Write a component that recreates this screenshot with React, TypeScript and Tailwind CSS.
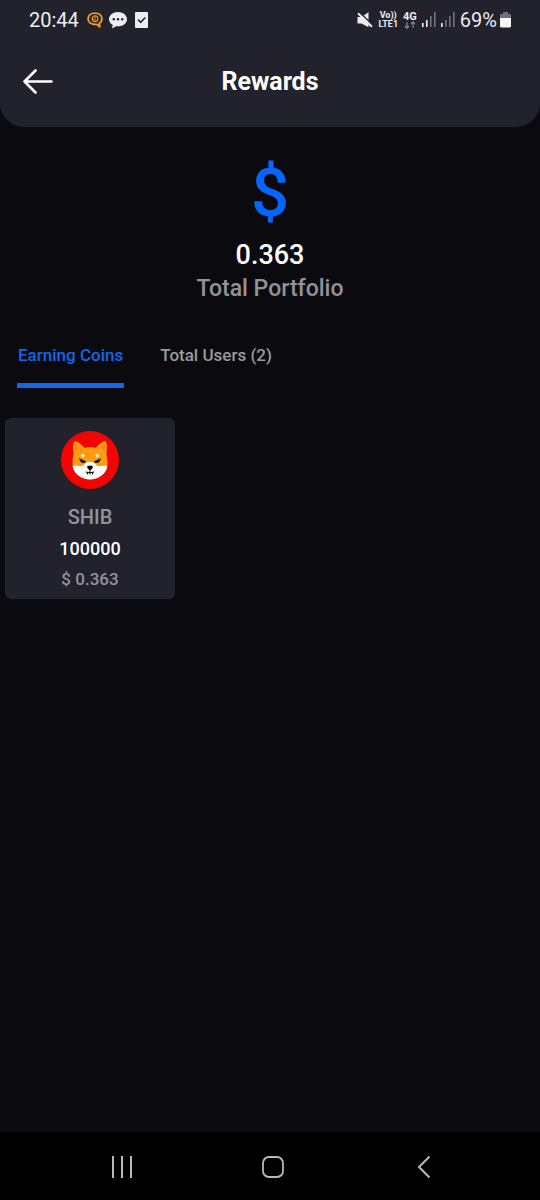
import React, { useState } from 'react';

interface Coin {
  symbol: string;
  amount: string;
  value: string;
}

const COINS: Coin[] = [{ symbol: 'SHIB', amount: '100000', value: '$ 0.363' }];

const TABS = ['Earning Coins', 'Total Users (2)'];

const ShibLogo: React.FC = () => (
  <svg viewBox="0 0 58 58" className="h-[58px] w-[58px]" aria-hidden="true">
    <circle cx="29" cy="29" r="29" fill="#f20500" />
    <path
      d="M14 10c-2 1.500-2.500 6.500-1.300 12.500-.7 3.500-1.400 6.500-1.200 10.500.3 9 9.500 15.300 17.500 15.300S46.200 42 46.500 33c.2-4-.5-7-1.200-10.500C46.500 16.500 46 11.500 44 10c-3.300.7-6.700 3.500-9.200 6.700-3.600-.8-8-.8-11.600 0C20.700 13.500 17.300 10.700 14 10z"
      fill="#ff9c14"
    />
    <path d="M14.500 12.500c-1 2.500-1 5.500-.4 8.500 1-1.700 2.300-3 4.200-4-1-2-2.300-3.500-3.800-4.500z" fill="#f58a18" />
    <path d="M43.500 12.500c1 2.500 1 5.500.4 8.500-1-1.700-2.300-3-4.200-4 1-2 2.300-3.500 3.800-4.500z" fill="#f58a18" />
    <path
      d="M11.600 35c2-.8 4.700-.8 7 .2 2 .2 3.800-.5 5-2.200 1.200-1.500 3-2.300 5.400-2.300s4.200.8 5.400 2.300c1.200 1.700 3 2.400 5 2.200 2.300-1 5-1 7-.2-1 8.300-9.500 13.500-17.400 13.500S12.600 43.300 11.600 35z"
      fill="#fff"
    />
    <circle cx="21.800" cy="24.600" r="1.700" fill="#fff6e8" />
    <circle cx="36.200" cy="24.600" r="1.700" fill="#fff6e8" />
    <path d="M18.500 27.800l6 2.700-.5 1.200-3.700-.4z" fill="#1b130c" stroke="#1b130c" strokeWidth=".8" />
    <path d="M39.500 27.800l-6 2.700.5 1.200 3.700-.4z" fill="#1b130c" stroke="#1b130c" strokeWidth=".8" />
    <path d="M26.500 34.800h5l.3 1.900-2 2.300h-1.600l-2-2.300z" fill="#000" />
    <path
      d="M29 38.500v3M24.800 41q4.200 1.400 8.400 0M26.500 41.500v1.800M29 41.500v2M31.500 41.500v1.800"
      fill="none"
      stroke="#000"
      strokeWidth="1"
    />
  </svg>
);

const SignalBars: React.FC<{ level: number }> = ({ level }) => (
  <svg viewBox="0 0 14 16" className="h-4 w-[14px]" aria-hidden="true">
    {[4, 7, 11, 15].map((height, i) => (
      <rect
        key={height}
        x={i * 4}
        y={15 - height}
        width="1.600"
        height={height}
        fill={i < level ? '#f2f2f4' : '#72727b'}
      />
    ))}
  </svg>
);

const StatusBar: React.FC = () => (
  <div className="flex h-10 items-center justify-between px-[29px] text-[#ededf0]">
    <div className="flex items-center gap-2">
      <span className="text-[20px] leading-6">20:44</span>
      <div className="flex items-center gap-[6px]">
        <svg viewBox="0 0 17 17" className="h-4 w-4" fill="none" aria-hidden="true">
          <path
            d="M8.500 1.200C4 1.200 1.200 3.800 1.200 7.300s2.800 5.900 7 5.900h2.300l3 2.600-.4-3.700c1.800-1.100 2.700-2.700 2.700-4.800 0-3.500-2.800-6.100-7.300-6.100z"
            stroke="#f29d18"
            strokeWidth="2"
            strokeLinejoin="round"
          />
          <circle cx="8.500" cy="7.200" r="3" stroke="#f29d18" strokeWidth="1.300" />
          <path d="M9.600 6.400a1.300 1.300 0 1 0 0 1.700" stroke="#f29d18" strokeWidth="1" />
        </svg>
        <svg viewBox="0 0 18 18" className="h-[18px] w-[18px]" aria-hidden="true">
          <path
            d="M9 1C4 1 0 4.200 0 8.200c0 2.500 1.500 4.500 3.800 5.800L3 17.500l4.200-2.300 1.800.1c5 0 9-3.100 9-7.100S14 1 9 1z"
            fill="#ededf0"
          />
          <circle cx="4.800" cy="8.200" r="1.200" fill="#22222d" />
          <circle cx="9" cy="8.200" r="1.200" fill="#22222d" />
          <circle cx="13.200" cy="8.200" r="1.200" fill="#22222d" />
        </svg>
        <svg viewBox="0 0 15 16" className="h-4 w-[15px]" aria-hidden="true">
          <rect x="2" width="13" height="16" rx="1" fill="#ededf0" />
          <path d="M5 7.500l2.700 2.800L12.300 5.500" fill="none" stroke="#22222d" strokeWidth="1.600" />
        </svg>
      </div>
    </div>
    <div className="flex items-center gap-[5px]">
      <svg viewBox="0 0 16 16" className="h-4 w-4" aria-hidden="true">
        <path d="M.5 5h4L11.500.3v15L4.500 11.500h-4z" fill="#ededf0" />
        <path d="M2.500 0.300l13 12.400" stroke="#22222d" strokeWidth="1.400" />
        <path d="M1 1.300l14 13.500" stroke="#ededf0" strokeWidth="2" />
      </svg>
      <div className="flex flex-col items-center text-[9px] font-bold leading-[9px]">
        <span>Vo))</span>
        <span>LTE1</span>
      </div>
      <div className="flex flex-col items-center text-[11px] font-bold leading-[9px]">
        <span>4G</span>
        <svg viewBox="0 0 12 8" className="h-2 w-3" aria-hidden="true">
          <path
            d="M3 1v6M1 5l2 2.200L5 5M9 7V1M7 3l2-2.200L11 3"
            fill="none"
            stroke="#85858e"
            strokeWidth="1.200"
          />
        </svg>
      </div>
      <SignalBars level={2} />
      <SignalBars level={1} />
      <div className="flex items-center gap-[3px]">
        <span className="text-[20px] leading-6">69%</span>
        <svg viewBox="0 0 11 16" className="h-4 w-[11px]" aria-hidden="true">
          <path d="M3 0h5v2h2q1 0 1 1v3H0V3q0-1 1-1h2z" fill="#6f6f78" />
          <path d="M0 6h11v8q0 1.500-1.500 1.500h-8Q0 15.500 0 14z" fill="#f5f5f6" />
        </svg>
      </div>
    </div>
  </div>
);

const Header: React.FC = () => (
  <header className="rounded-b-3xl bg-[#22222d] pb-1">
    <StatusBar />
    <div className="grid h-[83px] grid-cols-[30px_1fr_30px] items-center px-[23px]">
      <button type="button" aria-label="Back">
        <svg viewBox="0 0 30 26" className="h-[26px] w-[30px]" fill="none" aria-hidden="true">
          <path
            d="M28.500 12.500H1.500M12.500 1.500l-11 11 11 11"
            stroke="#fff"
            strokeWidth="2.600"
            strokeLinecap="round"
            strokeLinejoin="round"
          />
        </svg>
      </button>
      <h1 className="text-center text-[25px] font-bold leading-8 text-white">Rewards</h1>
    </div>
  </header>
);

const CoinCard: React.FC<{ coin: Coin }> = ({ coin }) => (
  <article className="flex flex-col items-center rounded-md bg-[#22222d] pb-2 pt-[13px] font-medium">
    <ShibLogo />
    <h2 className="mt-4 text-[20px] leading-6 text-[#92929b]">{coin.symbol}</h2>
    <p className="mt-2 text-[18px] leading-6 text-white">{coin.amount}</p>
    <p className="mt-[6px] text-[17px] leading-6 text-[#92929b]">{coin.value}</p>
  </article>
);

const NavBar: React.FC = () => (
  <nav className="grid h-[68px] grid-cols-3 items-center bg-black pl-[46px] pr-[41px] pt-[2px]">
    <button type="button" aria-label="Recent apps" className="flex justify-center">
      <svg viewBox="0 0 22 22" className="h-[22px] w-[22px]" aria-hidden="true">
        <path d="M2 0v22M11 0v22M20 0v22" stroke="#b9b9b9" strokeWidth="2" />
      </svg>
    </button>
    <button type="button" aria-label="Home" className="flex justify-center">
      <svg viewBox="0 0 22 22" className="h-[22px] w-[22px]" aria-hidden="true">
        <rect x="1" y="1" width="20" height="20" rx="6" fill="none" stroke="#b9b9b9" strokeWidth="1.800" />
      </svg>
    </button>
    <button type="button" aria-label="Back" className="flex justify-center">
      <svg viewBox="0 0 14 24" className="h-6 w-[14px]" fill="none" aria-hidden="true">
        <path d="M12.500 1.500L2 12l10.500 10.500" stroke="#b9b9b9" strokeWidth="2" />
      </svg>
    </button>
  </nav>
);

const App: React.FC = () => {
  const [activeTab, setActiveTab] = useState(TABS[0]);

  return (
    <div className="flex min-h-screen flex-col bg-[#0b0b0f] font-['Roboto',sans-serif]">
      <Header />

      <main className="flex-1">
        {/* Portfolio total */}
        <section className="flex flex-col items-center pt-[26px] font-medium">
          <span className="text-[67px] leading-[80px] text-[#0566ff]">$</span>
          <span className="mt-[6px] text-[27px] leading-8 text-white">0.363</span>
          <span className="mt-1 text-[23px] leading-7 text-[#92929b]">Total Portfolio</span>
        </section>

        <div className="mt-10 flex gap-[35px] px-[17px]" role="tablist">
          {TABS.map((tab) => (
            <button
              key={tab}
              type="button"
              role="tab"
              aria-selected={tab === activeTab}
              onClick={() => setActiveTab(tab)}
              className={`border-b-[5px] px-px pb-4 text-[17px] font-medium leading-6 ${
                tab === activeTab ? 'border-[#1266e8] text-[#1266e8]' : 'border-transparent text-[#9b9b9b]'
              }`}
            >
              {tab}
            </button>
          ))}
        </div>

        <section className="mt-[30px] grid grid-cols-3 gap-[10px] px-[5px]">
          {COINS.map((coin) => (
            <CoinCard key={coin.symbol} coin={coin} />
          ))}
        </section>
      </main>

      <NavBar />
    </div>
  );
};

export default App;
